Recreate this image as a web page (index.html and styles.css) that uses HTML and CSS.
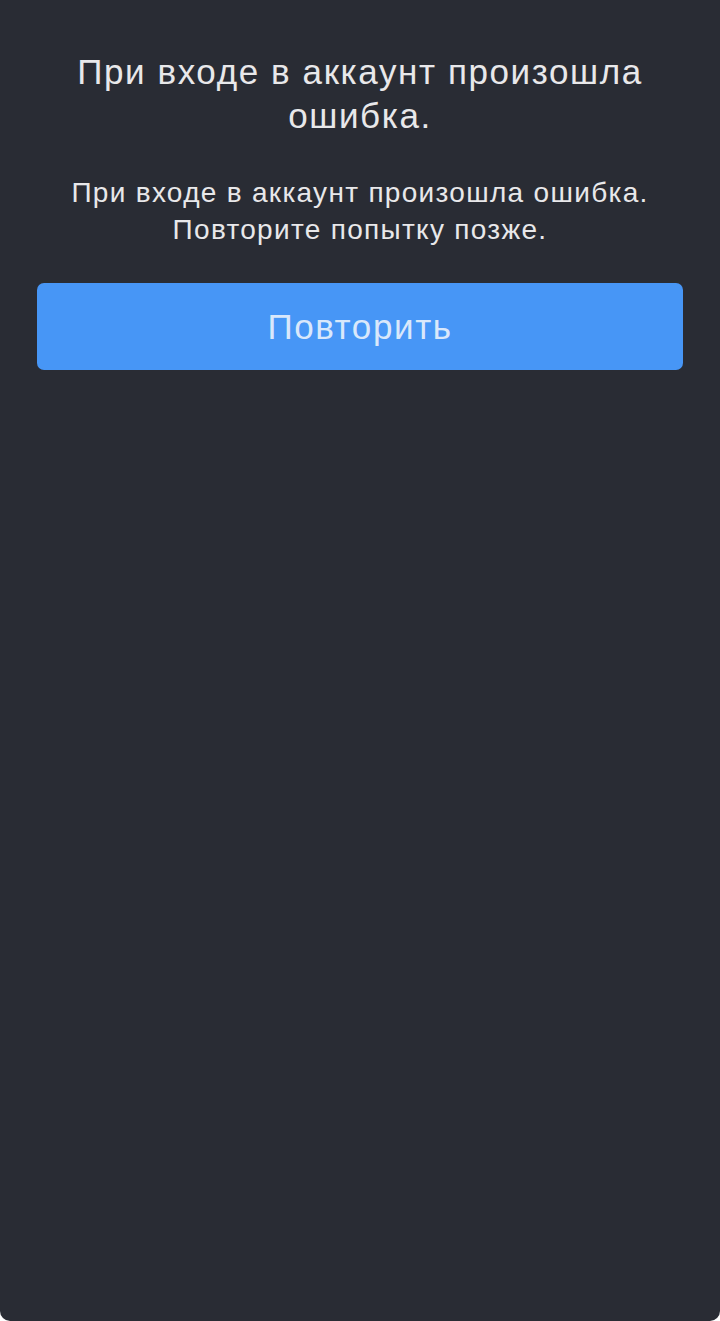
FILE: index.html
```html
<!DOCTYPE html>
<html lang="ru">
<head>
<meta charset="utf-8">
<title>Ошибка входа</title>
<link rel="stylesheet" href="styles.css">
</head>
<body>
<main class="screen">
  <h1 class="title">При входе в аккаунт произошла ошибка.</h1>
  <p class="message">При входе в аккаунт произошла ошибка.<br>Повторите попытку позже.</p>
  <button class="retry" type="button">Повторить</button>
</main>
</body>
</html>
```
FILE: styles.css
```css
html, body {
  margin: 0;
  padding: 0;
  background: #ffffff;
}
.screen {
  box-sizing: border-box;
  width: 720px;
  height: 1321px;
  background: #292c34;
  border-radius: 0 0 10px 10px;
  padding: 50px 37px 0;
  display: flex;
  flex-direction: column;
  align-items: stretch;
  font-family: "Liberation Sans", Arial, sans-serif;
}
.title {
  margin: 0 16px;
  font-size: 35px;
  font-weight: normal;
  line-height: 44px;
  letter-spacing: 1.6px;
  text-align: center;
  color: #e8e8ea;
}
.message {
  margin: 36px 0 0;
  font-size: 28px;
  line-height: 37px;
  letter-spacing: 1.3px;
  text-align: center;
  color: #e8e8ea;
}
.retry {
  margin-top: 35px;
  height: 87px;
  border: none;
  border-radius: 7px;
  background: #4796f6;
  color: #d9e8fb;
  font-family: "Liberation Sans", Arial, sans-serif;
  font-size: 35px;
  letter-spacing: 1.6px;
  padding: 0;
}
```
